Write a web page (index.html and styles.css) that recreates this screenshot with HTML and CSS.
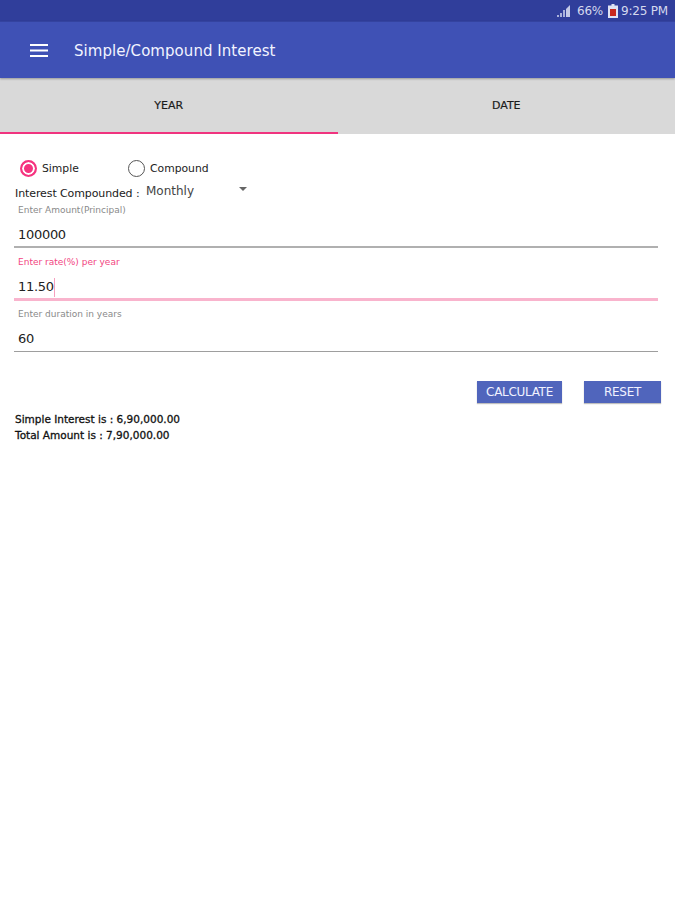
FILE: index.html
```html
<!DOCTYPE html>
<html lang="en">
<head>
<meta charset="utf-8">
<title>Simple/Compound Interest</title>
<link rel="stylesheet" href="styles.css">
</head>
<body>
<div class="status">
  <svg class="signal" width="16" height="14" viewBox="0 0 16 14"><path d="M1 13h2v-2H1zM4 13h2V9H4zM7 13h2V6H7z" fill="#aab2dc"/><path d="M10 13h4V1l-4 4z" fill="#c3c9e8"/></svg>
  <span class="status-text">66%</span>
  <svg class="battery" width="10" height="14" viewBox="0 0 10 14"><path d="M3.500 0h3v1.500H10V14H0V1.500h3.500z" fill="#dfe2f3"/><path d="M2 5h6v7H2z" fill="#c8281e"/></svg>
  <span class="status-text">9:25 PM</span>
</div>
<header class="appbar">
  <svg class="menu" width="18" height="13" viewBox="0 0 18 13"><path d="M0 1h18M0 6.500h18M0 12h18" stroke="#fff" stroke-width="2"/></svg>
  <h1 class="title">Simple/Compound Interest</h1>
</header>
<nav class="tabs">
  <div class="tab tab-active">YEAR</div>
  <div class="tab">DATE</div>
</nav>
<main class="form">
  <div class="radios">
    <div class="radio radio-simple"><span class="dot dot-on"></span><span>Simple</span></div>
    <div class="radio"><span class="dot"></span><span>Compound</span></div>
  </div>
  <div class="compound">
    <span class="compound-label">Interest Compounded :</span>
    <span class="select"><span class="select-value">Monthly</span><span class="caret"></span></span>
  </div>
  <div class="field field-first">
    <label class="field-label">Enter Amount(Principal)</label>
    <div class="field-value">100000</div>
  </div>
  <div class="field field-focus">
    <label class="field-label">Enter rate(%) per year</label>
    <div class="field-value">11.50<span class="cursor"></span></div>
  </div>
  <div class="field field-last">
    <label class="field-label">Enter duration in years</label>
    <div class="field-value">60</div>
  </div>
  <div class="actions">
    <button class="btn btn-calc">CALCULATE</button>
    <button class="btn btn-reset">RESET</button>
  </div>
  <div class="results">
    <div>Simple Interest is : 6,90,000.00</div>
    <div>Total Amount is : 7,90,000.00</div>
  </div>
</main>
</body>
</html>
```
FILE: styles.css
```css
* { box-sizing: border-box; }
html, body { margin: 0; background: #fff; }
body { font-family: "DejaVu Sans", sans-serif; color: #111; width: 675px; height: 900px; overflow: hidden; }

.status { height: 21px; background: #303e9b; display: flex; align-items: center; justify-content: flex-end; padding-right: 7px; gap: 3px; }
.status-text { font-size: 12px; color: #d5d9ee; letter-spacing: -0.2px; }
.signal { margin-right: 2px; }
.battery { margin-left: 2px; }

.appbar { height: 57px; background: #3f51b5; display: flex; align-items: center; padding-left: 30px; border-top: 1px solid #34439f; box-shadow: 0 1px 2px rgba(0,0,0,.3); position: relative; }
.menu { flex: none; }
.title { margin: 2px 0 0 26px; font-size: 15px; font-weight: 400; color: #f2f4ff; letter-spacing: 0.05px; }

.tabs { height: 56px; background: #d9d9d9; display: flex; }
.tab { flex: 1; display: flex; align-items: center; justify-content: center; font-size: 11px; color: #1c1c1c; border-bottom: 2px solid transparent; -webkit-text-stroke: 0.2px #1c1c1c; }
.tab-active { border-bottom-color: #f0347f; }

.form { padding: 25px 14px 0 14px; }
.radios { display: flex; height: 18px; padding-left: 6px; font-size: 10.800px; }
.radio { display: flex; align-items: center; gap: 5px; color: #222; }
.radio-simple { width: 108px; }
.dot { width: 17px; height: 17px; border-radius: 50%; border: 1.500px solid #555; display: block; flex: none; }
.dot-on { border: 2px solid #f5347f; background: #f5347f; box-shadow: inset 0 0 0 2px #fff; }

.compound { display: flex; height: 22px; font-size: 11px; }
.compound-label { margin-top: 10px; width: 132px; padding-left: 1px; color: #1a1a1a; white-space: nowrap; letter-spacing: -0.1px; }
.select { display: flex; width: 101px; justify-content: space-between; margin-top: 7px; }
.select-value { font-size: 12px; color: #444; }
.caret { width: 0; height: 0; margin-top: 3px; border: 4px solid transparent; border-top: 4px solid #666; border-bottom: 0; }

.field { height: 51px; padding: 7px 3px 0 4px; border-bottom: 1px solid #9e9e9e; margin-right: 3px; }
.field-first { height: 50px; margin-top: -1px; padding-top: 6px; border-bottom: 2px solid #b0b0b0; }
.field-focus { height: 53px; padding-top: 8px; border-bottom: 3px solid #f9b4cd; }
.field-label { display: block; height: 14px; font-size: 9px; line-height: 12px; color: #8a8a8a; }
.field-value { margin-top: 7px; height: 20px; font-size: 13px; line-height: 20px; color: #222; display: flex; align-items: center; letter-spacing: -0.3px; }
.field-focus .field-label { color: #f2457f; }
.cursor { display: block; width: 1.500px; height: 19px; background: #f6a0bf; }

.actions { display: flex; justify-content: flex-end; gap: 22px; margin-top: 29px; }
.btn { border: 0; padding: 0; height: 22px; font: 12px "DejaVu Sans", sans-serif; color: #f0f2ff; background: #5065bc; box-shadow: 0 1px 1px rgba(0,0,0,.25); letter-spacing: -0.3px; }
.btn-calc { width: 85px; }
.btn-reset { width: 77px; }

.results { margin-top: 8px; padding-left: 1px; font-size: 10.500px; line-height: 16px; color: #111; -webkit-text-stroke: 0.3px #111; white-space: nowrap; }
```
